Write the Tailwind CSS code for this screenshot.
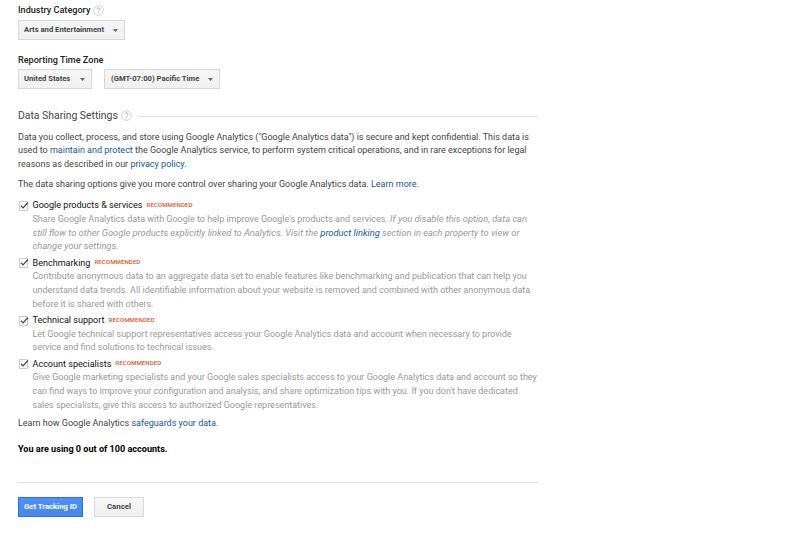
<!DOCTYPE html>
<html lang="en">
<head>
    <meta charset="UTF-8">
    <meta name="viewport" content="width=device-width, initial-scale=1.0">
    <title>New Account</title>
    <script src="https://cdn.jsdelivr.net/npm/@tailwindcss/browser@4"></script>
</head>
<body class="bg-white font-['Roboto',sans-serif] text-[9px] leading-[13.8px] text-[#444] whitespace-nowrap">

    <main class="ml-[18px] w-[520px] pt-[4px]">
        <!-- Industry category -->
        <div class="flex h-[13px] items-center gap-[3px]">
            <h2 class="pt-[1px] text-[9.1px] font-medium text-[#222]">Industry Category</h2>
            <svg class="size-[11px]" viewBox="0 0 11 11" fill="none" stroke="#c4c4c4"><circle cx="5.5" cy="5.5" r="4.8" stroke-width=".8"/><path d="M4 4.4c0-2 3-2 3-.1 0 1.1-1.5 1.1-1.5 2.3M5.5 7.4v1" stroke="#999" stroke-width=".8"/></svg>
        </div>
        <button class="mt-[3px] flex h-[20px] w-[107px] items-center justify-between border border-[#d8d8d8] bg-linear-to-b from-[#f6f6f6] to-[#f0f0f0] pr-[6px] pl-[5px] text-[7.65px] font-bold text-[#444]">
            <span>Arts and Entertainment</span>
            <svg class="mt-[1px] h-[3px] w-[5px]" viewBox="0 0 5 3"><path d="M0 0h5L2.5 3z" fill="#666"/></svg>
        </button>

        <!-- Time zone -->
        <h2 class="mt-[14px] h-[13px] text-[9.1px] font-medium text-[#222]">Reporting Time Zone</h2>
        <div class="mt-[2px] flex gap-[12px]">
            <button class="flex h-[20px] w-[74px] items-center justify-between border border-[#d8d8d8] bg-linear-to-b from-[#f6f6f6] to-[#f0f0f0] pr-[6px] pl-[5px] text-[7.65px] font-bold text-[#444]">
                <span>United States</span>
                <svg class="mt-[1px] h-[3px] w-[5px]" viewBox="0 0 5 3"><path d="M0 0h5L2.5 3z" fill="#666"/></svg>
            </button>
            <button class="flex h-[20px] w-[116px] items-center justify-between border border-[#d8d8d8] bg-linear-to-b from-[#f6f6f6] to-[#f0f0f0] pr-[6px] pl-[6px] text-[7.65px] font-bold text-[#444]">
                <span>(GMT-07:00) Pacific Time</span>
                <svg class="mt-[1px] h-[3px] w-[5px]" viewBox="0 0 5 3"><path d="M0 0h5L2.5 3z" fill="#666"/></svg>
            </button>
        </div>

        <!-- Data sharing -->
        <div class="mt-[18px] flex h-[16px] items-center">
            <h2 class="pt-[1px] text-[10.4px]">Data Sharing Settings</h2>
            <svg class="mt-[1px] ml-[3px] size-[11px]" viewBox="0 0 11 11" fill="none" stroke="#c4c4c4"><circle cx="5.5" cy="5.5" r="4.8" stroke-width=".8"/><path d="M4 4.4c0-2 3-2 3-.1 0 1.1-1.5 1.1-1.5 2.3M5.5 7.4v1" stroke="#999" stroke-width=".8"/></svg>
            <div class="mt-[2px] ml-[6px] h-px flex-1 bg-[#e2e2e2]"></div>
        </div>
        <p class="mt-[7.6px]">Data you collect, process, and store using Google Analytics ("Google Analytics data") is secure and kept confidential. This data is<br>used to <a class="text-[#15569b]">maintain and protect</a> the Google Analytics service, to perform system critical operations, and in rare exceptions for legal<br>reasons as described in our <a class="text-[#15569b]">privacy policy</a>.</p>
        <p class="mt-[6px]">The data sharing options give you more control over sharing your Google Analytics data. <a class="text-[#15569b]">Learn more</a>.</p>

        <ul class="mt-[8px] flex flex-col gap-[3px]">
            <li>
                <div class="flex h-[13px] items-center">
                    <svg class="mb-[1px] h-[10px] w-[11px]" viewBox="0 0 11 10" fill="none"><path d="M1.5.5h8v9h-8z" fill="#fafafa" stroke="#ccc"/><path d="M2.9 4.7l2.1 2.2L10 1.5" stroke="#444" stroke-width="1.2"/></svg>
                    <span class="ml-[3.5px] text-[9.05px] text-[#111]">Google products &amp; services</span>
                    <span class="mb-[1px] ml-[4px] text-[6.2px] font-medium text-[#d9592b]">RECOMMENDED</span>
                </div>
                <p class="pl-[14.5px] text-[#999]">Share Google Analytics data with Google to help improve Google's products and services. <i class="text-[9.3px] leading-[10px]">If you disable this option, data can<br>still flow to other Google products explicitly linked to Analytics. Visit the <a class="text-[#15569b]">product linking</a> section in each property to view or<br>change your settings.</i></p>
            </li>
            <li>
                <div class="flex h-[13px] items-center">
                    <svg class="mb-[1px] h-[10px] w-[11px]" viewBox="0 0 11 10" fill="none"><path d="M1.5.5h8v9h-8z" fill="#fafafa" stroke="#ccc"/><path d="M2.9 4.7l2.1 2.2L10 1.5" stroke="#444" stroke-width="1.2"/></svg>
                    <span class="ml-[3.5px] text-[9.05px] text-[#111]">Benchmarking</span>
                    <span class="mb-[1px] ml-[4px] text-[6.2px] font-medium text-[#d9592b]">RECOMMENDED</span>
                </div>
                <p class="pl-[14.5px] text-[#999]">Contribute anonymous data to an aggregate data set to enable features like benchmarking and publication that can help you<br>understand data trends. All identifiable information about your website is removed and combined with other anonymous data<br>before it is shared with others.</p>
            </li>
            <li>
                <div class="flex h-[13px] items-center">
                    <svg class="mb-[1px] h-[10px] w-[11px]" viewBox="0 0 11 10" fill="none"><path d="M1.5.5h8v9h-8z" fill="#fafafa" stroke="#ccc"/><path d="M2.9 4.7l2.1 2.2L10 1.5" stroke="#444" stroke-width="1.2"/></svg>
                    <span class="ml-[3.5px] text-[9.05px] text-[#111]">Technical support</span>
                    <span class="mb-[1px] ml-[4px] text-[6.2px] font-medium text-[#d9592b]">RECOMMENDED</span>
                </div>
                <p class="pl-[14.5px] text-[#999]">Let Google technical support representatives access your Google Analytics data and account when necessary to provide<br>service and find solutions to technical issues.</p>
            </li>
            <li>
                <div class="flex h-[13px] items-center">
                    <svg class="mb-[1px] h-[10px] w-[11px]" viewBox="0 0 11 10" fill="none"><path d="M1.5.5h8v9h-8z" fill="#fafafa" stroke="#ccc"/><path d="M2.9 4.7l2.1 2.2L10 1.5" stroke="#444" stroke-width="1.2"/></svg>
                    <span class="ml-[3.5px] text-[9.05px] text-[#111]">Account specialists</span>
                    <span class="mb-[1px] ml-[4px] text-[6.2px] font-medium text-[#d9592b]">RECOMMENDED</span>
                </div>
                <p class="pl-[14.5px] text-[#999]">Give Google marketing specialists and your Google sales specialists access to your Google Analytics data and account so they<br>can find ways to improve your configuration and analysis, and share optimization tips with you. If you don't have dedicated<br>sales specialists, give this access to authorized Google representatives.</p>
            </li>
        </ul>

        <p class="mt-[4px]">Learn how Google Analytics <a class="text-[#15569b]">safeguards your data</a>.</p>
        <p class="mt-[13px] text-[9.1px] font-bold text-black">You are using 0 out of 100 accounts.</p>

        <!-- Actions -->
        <div class="mt-[24.4px] flex gap-[11px] border-t border-[#e2e2e2] pt-[14px]">
            <button class="h-[20px] w-[65px] border border-[#2f6fe4] bg-linear-to-b from-[#4d90fe] to-[#4787ed] text-[7.7px] font-bold text-white">Get Tracking ID</button>
            <button class="h-[20px] w-[50px] border border-[#d8d8d8] bg-linear-to-b from-[#f6f6f6] to-[#f0f0f0] text-[7.8px] font-bold text-[#444]">Cancel</button>
        </div>
    </main>

</body>
</html>
